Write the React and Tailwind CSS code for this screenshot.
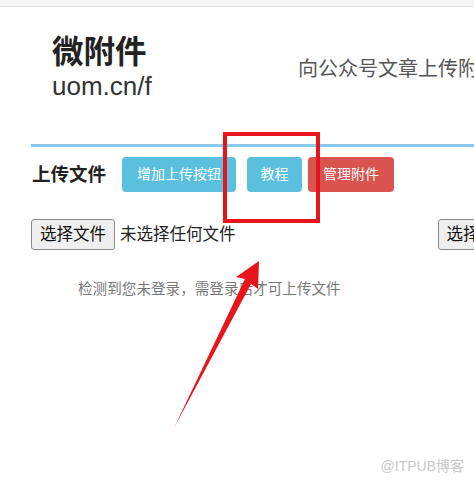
import React from 'react';

const font = { fontFamily: '"Liberation Sans", "Noto Sans CJK SC", sans-serif' };

const FileButton = ({ className = '' }) => (
    <button className={`w-[84px] h-[31px] shrink-0 border border-[#8a8a8a] bg-[#efefef] rounded-[3px] text-[16.5px] text-[#111] ${className}`}>
        选择文件
    </button>
);

export default function App() {
    return (
        <div className="relative w-[474px] h-[485px] bg-white overflow-hidden" style={font}>
            <div className="h-[7px] bg-[#f5f5f5] border-b border-[#e4e4e4]" />

            {/* header */}
            <div className="flex pt-[27px] pl-[52px]">
                <div className="w-[246px] shrink-0">
                    <div className="text-[31.5px] font-bold leading-[36px] text-[#222]">微附件</div>
                    <div className="mt-[3px] text-[26px] leading-[26px] text-[#333]">uom.cn/f</div>
                </div>
                <div className="pt-[21px] text-[20px] leading-[28px] text-[#555] whitespace-nowrap">向公众号文章上传附件</div>
            </div>

            <div className="mt-[45px] ml-[31px] h-[3px] bg-[#88c9ef]" />

            {/* toolbar */}
            <div className="flex items-center ml-[32px] mt-[10px]">
                <span className="text-[18.5px] font-bold text-[#222] whitespace-nowrap">上传文件</span>
                <button className="ml-[16px] w-[114px] h-[35px] rounded-[4px] bg-[#5bc0de] text-white text-[14px]">增加上传按钮</button>
                <button className="ml-[11px] w-[55px] h-[35px] rounded-[4px] bg-[#5bc0de] text-white text-[14px]">教程</button>
                <button className="ml-[6px] w-[86px] h-[35px] rounded-[4px] bg-[#d9534f] text-white text-[14px]">管理附件</button>
            </div>

            {/* file inputs */}
            <div className="flex items-center ml-[31px] mt-[27px] whitespace-nowrap">
                <FileButton />
                <span className="ml-[5px] text-[16.5px] text-[#222]">未选择任何文件</span>
                <FileButton className="ml-[202px]" />
            </div>

            <p className="mt-[29px] ml-[78px] text-[14.6px] leading-[20px] text-[#777] whitespace-nowrap">
                检测到您未登录，需登录后才可上传文件
            </p>

            {/* annotations */}
            <div className="absolute left-[223px] top-[132px] w-[97px] h-[91px] border-[4px] border-[#e8141c]" />
            <svg className="absolute inset-0" width="474" height="485" viewBox="0 0 474 485">
                <polygon points="259,261 258,289 251,284 174,428 245,279 236,277" fill="#e8141c" />
            </svg>

            <div className="absolute right-[10px] bottom-[8px] text-[14px] text-[#c8c8c8]">@ITPUB博客</div>
        </div>
    );
}
